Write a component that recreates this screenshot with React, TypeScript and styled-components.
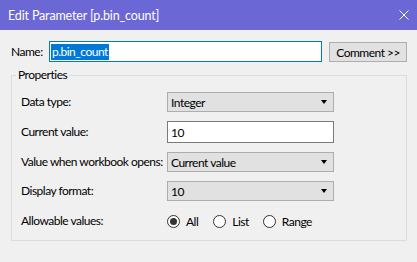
import React from "react";
import styled, { createGlobalStyle } from "styled-components";

const Global = createGlobalStyle`
  html, body { margin: 0; padding: 0; background: #f0f0f0; }
  body { font-family: Lato, "Noto Sans", sans-serif; font-size: 12px; letter-spacing: -0.5px; color: #000; }
  * { box-sizing: border-box; }
`;

const Window = styled.div`
  width: 417px;
  height: 262px;
  background: #f0f0f0;
  display: flex;
  flex-direction: column;
  overflow: hidden;
`;

const TitleBar = styled.div`
  height: 30px;
  flex: none;
  background: #6b67d4;
  color: #fff;
  display: flex;
  align-items: center;
  justify-content: space-between;
  padding: 0 8px 0 8px;
  font-size: 12.5px;
  letter-spacing: -0.15px;
`;

const CloseIcon = styled.svg`
  width: 10px;
  height: 10px;
`;

const Body = styled.div`
  padding: 11px 10px 0 11px;
  display: flex;
  flex-direction: column;
`;

const NameRow = styled.div`
  display: flex;
  align-items: center;
  height: 21px;
`;

const Label = styled.span`
  white-space: nowrap;
  line-height: 16px;
`;

const NameLabel = styled(Label)`
  width: 38px;
`;

const NameInput = styled.div`
  width: 274px;
  height: 21px;
  border: 1px solid #0078d7;
  background: #fff;
  display: flex;
  align-items: center;
  padding-left: 1px;
`;

const Selected = styled.span`
  background: #0078d7;
  color: #fff;
  line-height: 16px;
  padding: 0 1px;
`;

const Button = styled.div`
  margin-left: 7px;
  width: 78px;
  height: 20px;
  margin-top: 1px;
  border: 1px solid #adadad;
  background: #e1e1e1;
  display: flex;
  align-items: center;
  justify-content: center;
  white-space: nowrap;
`;

const Group = styled.fieldset`
  margin: 6px 0 0 0;
  padding: 10px 10px 9px 9px;
  border: 1px solid #dcdcdc;
  min-width: 0;
  display: grid;
  grid-template-columns: 146px 167px;
  row-gap: 9px;
  align-items: center;
`;

const Legend = styled.legend`
  margin-left: -5px;
  padding: 0 2px;
  line-height: 14px;
`;

const Combo = styled.div`
  height: 20px;
  border: 1px solid #adadad;
  background: #e1e1e1;
  display: flex;
  align-items: center;
  justify-content: space-between;
  padding: 0 6px 0 3px;
`;

const Arrow = styled.span`
  width: 0;
  height: 0;
  border-left: 3.5px solid transparent;
  border-right: 3.5px solid transparent;
  border-top: 4px solid #000;
`;

const TextBox = styled.div`
  height: 22px;
  border: 1px solid #7a7a7a;
  background: #fff;
  display: flex;
  align-items: center;
  padding-left: 3px;
`;

const RadioRow = styled.div`
  height: 21px;
  display: flex;
  align-items: center;
  padding-top: 1px;
`;

const RadioItem = styled.div<{ $gap: number }>`
  display: flex;
  align-items: center;
  margin-right: ${(p) => p.$gap}px;
`;

const RadioCircle = styled.span<{ $on?: boolean }>`
  width: 13px;
  height: 13px;
  border-radius: 50%;
  border: 1px solid #333;
  background: #fff;
  display: flex;
  align-items: center;
  justify-content: center;
  margin-right: 6px;
  &::after {
    content: "";
    display: ${(p) => (p.$on ? "block" : "none")};
    width: 7px;
    height: 7px;
    border-radius: 50%;
    background: #333;
  }
`;

function ComboBox({ value }: { value: string }) {
  return (
    <Combo>
      <span>{value}</span>
      <Arrow />
    </Combo>
  );
}

export default function App() {
  return (
    <>
      <Global />
      <Window>
        <TitleBar>
          <span>Edit Parameter [p.bin_count]</span>
          <CloseIcon viewBox="0 0 10 10">
            <path d="M0.5 0.5 L9.5 9.5 M9.5 0.5 L0.5 9.5" stroke="#fff" strokeWidth="1" fill="none" />
          </CloseIcon>
        </TitleBar>
        <Body>
          <NameRow>
            <NameLabel>Name:</NameLabel>
            <NameInput>
              <Selected>p.bin_count</Selected>
            </NameInput>
            <Button>Comment &gt;&gt;</Button>
          </NameRow>
          <Group>
            <Legend>Properties</Legend>
            <Label>Data type:</Label>
            <ComboBox value="Integer" />
            <Label>Current value:</Label>
            <TextBox>10</TextBox>
            <Label>Value when workbook opens:</Label>
            <ComboBox value="Current value" />
            <Label>Display format:</Label>
            <ComboBox value="10" />
            <Label>Allowable values:</Label>
            <RadioRow>
              <RadioItem $gap={15}>
                <RadioCircle $on />
                <span>All</span>
              </RadioItem>
              <RadioItem $gap={14}>
                <RadioCircle />
                <span>List</span>
              </RadioItem>
              <RadioItem $gap={0}>
                <RadioCircle />
                <span>Range</span>
              </RadioItem>
            </RadioRow>
          </Group>
        </Body>
      </Window>
    </>
  );
}
